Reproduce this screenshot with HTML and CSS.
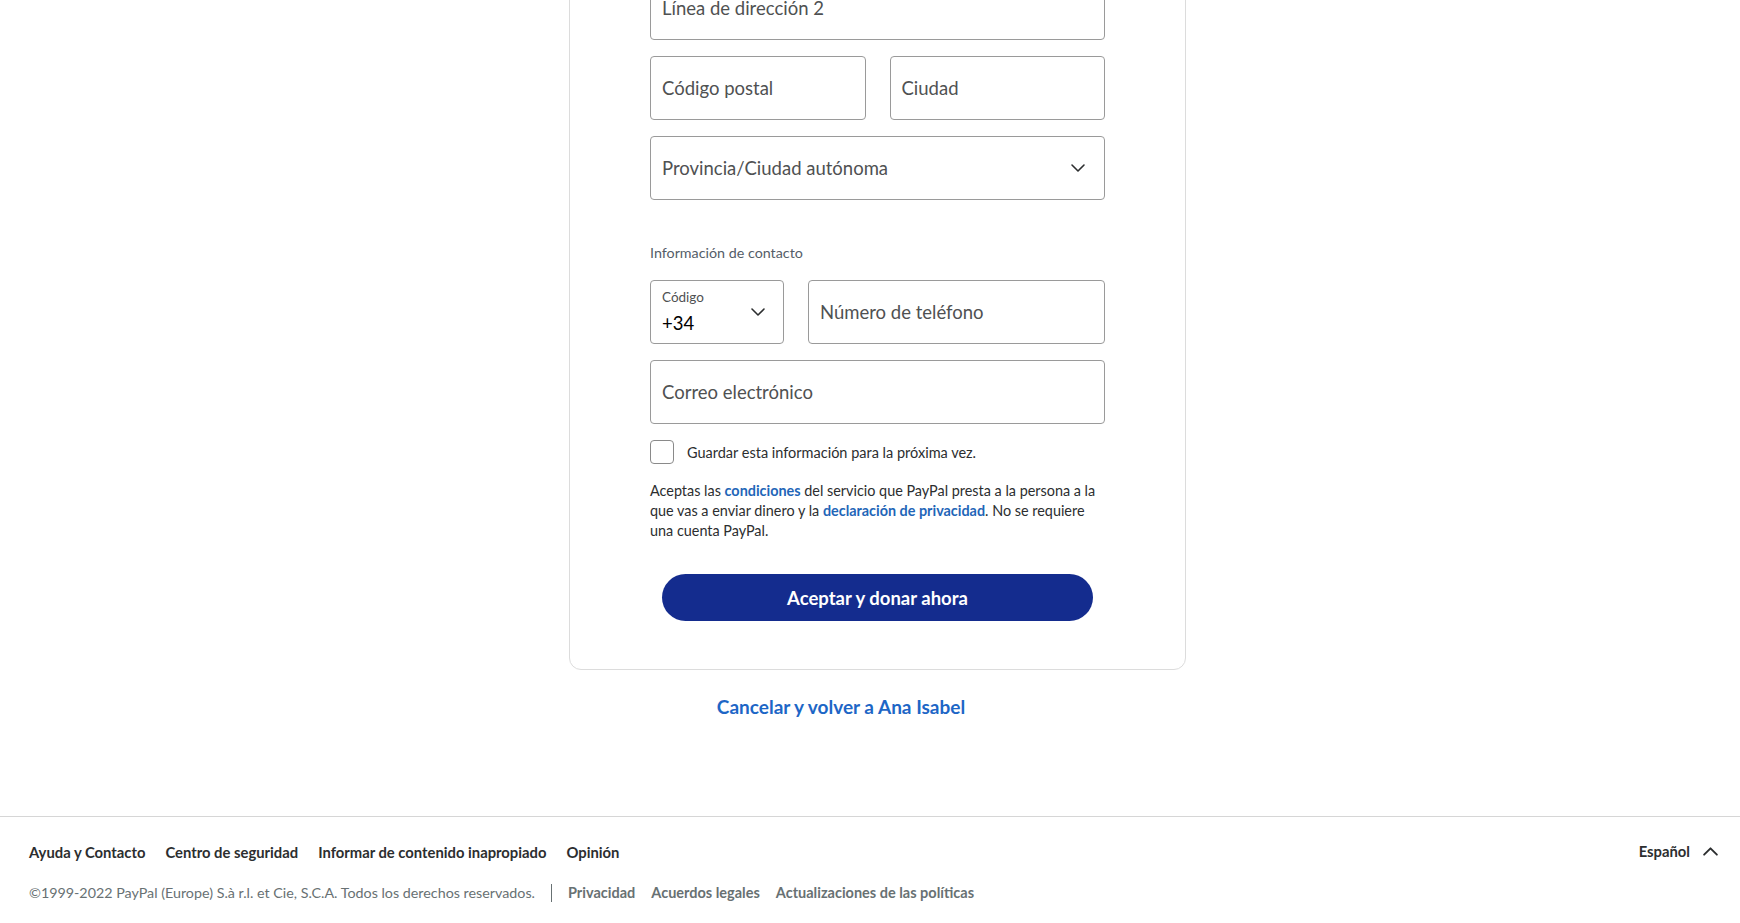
FILE: index.html
```html
<!DOCTYPE html>
<html lang="es">
  <head>
    <meta charset="utf-8">
    <title>PayPal - Donar</title>
    <link rel="stylesheet" href="styles.css">
  </head>
  <body>
    <main class="page">
      <!-- tarjeta con el formulario (la parte de arriba queda fuera por el scroll) -->
      <div class="card">
        <div class="field">
          <span class="placeholder">Línea de dirección 2</span>
        </div>
        <div class="row">
          <div class="field">
            <span class="placeholder">Código postal</span>
          </div>
          <div class="field">
            <span class="placeholder">Ciudad</span>
          </div>
        </div>
        <div class="field select">
          <span class="placeholder">Provincia/Ciudad autónoma</span>
          <svg class="chevron" viewBox="0 0 16 16" width="16" height="16">
            <path d="M2 5 L8 11 L14 5" fill="none" stroke="#2c2e2f" stroke-width="1.6" stroke-linecap="round" stroke-linejoin="round"/>
          </svg>
        </div>

        <p class="section-label">Información de contacto</p>
        <div class="row phone-row">
          <div class="field select code">
            <div class="code-value">
              <span class="small-label">Código</span>
              <span class="value">+34</span>
            </div>
            <svg class="chevron" viewBox="0 0 16 16" width="16" height="16">
              <path d="M2 5 L8 11 L14 5" fill="none" stroke="#2c2e2f" stroke-width="1.6" stroke-linecap="round" stroke-linejoin="round"/>
            </svg>
          </div>
          <div class="field">
            <span class="placeholder">Número de teléfono</span>
          </div>
        </div>
        <div class="field">
          <span class="placeholder">Correo electrónico</span>
        </div>

        <label class="remember">
          <span class="checkbox"></span>
          <span>Guardar esta información para la próxima vez.</span>
        </label>

        <p class="terms">
          Aceptas las <a href="#">condiciones</a> del servicio que PayPal presta a la persona a la
          que vas a enviar dinero y la <a href="#">declaración de privacidad</a>. No se requiere
          una cuenta PayPal.
        </p>

        <button class="donate-btn">Aceptar y donar ahora</button>
      </div>

      <div class="cancel">
        <a href="#" class="cancel-link">Cancelar y volver a Ana Isabel<span class="hidden-name"></span></a>
      </div>
    </main>

    <footer class="footer">
      <div class="footer-top">
        <nav class="footer-links">
          <a href="#">Ayuda y Contacto</a>
          <a href="#">Centro de seguridad</a>
          <a href="#">Informar de contenido inapropiado</a>
          <a href="#">Opinión</a>
        </nav>
        <div class="language">
          <span>Español</span>
          <svg viewBox="0 0 16 16" width="17" height="17">
            <path d="M2 11 L8 5 L14 11" fill="none" stroke="#2c2e2f" stroke-width="1.8" stroke-linecap="round" stroke-linejoin="round"/>
          </svg>
        </div>
      </div>
      <div class="footer-bottom">
        <span class="copyright">©1999-2022 PayPal (Europe) S.à r.l. et Cie, S.C.A. Todos los derechos reservados.</span>
        <span class="divider"></span>
        <a href="#">Privacidad</a>
        <a href="#">Acuerdos legales</a>
        <a href="#">Actualizaciones de las políticas</a>
      </div>
    </footer>
  </body>
</html>
```

FILE: styles.css
```css
body {
  margin: 0;
  font-family: Lato, "Open Sans", sans-serif;
  color: #2c2e2f;
  background-color: #ffffff;
}

a {
  text-decoration: none;
}

.page {
  display: flex;
  flex-direction: column;
  align-items: center;
  padding-left: 15px;
  padding-bottom: 97px;
}

/* la tarjeta empieza por encima de la ventana */
.card {
  width: 455px;
  margin-top: -41px;
  padding: 16px 80px 48px;
  border: 1px solid #dcdcdc;
  border-radius: 12px;
  display: flex;
  flex-direction: column;
  gap: 16px;
}

.row {
  display: flex;
  gap: 24px;
}

.row .field {
  flex: 1;
}

.field {
  height: 62px;
  border: 1px solid #9a9a9a;
  border-radius: 4px;
  display: flex;
  align-items: center;
  justify-content: space-between;
  padding: 0 18px 0 11px;
}

.placeholder {
  font-size: 18.5px;
  color: #4f5152;
}

.chevron {
  flex-shrink: 0;
}

.section-label {
  margin: 27px 0 1px;
  font-size: 14.3px;
  line-height: 20px;
  color: #545d68;
}

.phone-row .code {
  flex: 0 0 104px;
  padding-right: 17px;
}

.code-value {
  align-self: flex-start;
  display: flex;
  flex-direction: column;
  padding-top: 7px;
}

.small-label {
  font-size: 13.5px;
  color: #4f5152;
  line-height: 18px;
}

.value {
  margin-top: 5px;
  font-size: 18.5px;
  color: #000000;
  line-height: 24px;
}

.remember {
  display: flex;
  align-items: center;
  gap: 13px;
  font-size: 14.5px;
  color: #2c2e2f;
}

.checkbox {
  width: 22px;
  height: 22px;
  border: 1px solid #8a8a8a;
  border-radius: 4px;
}

.terms {
  margin: 1px 0 0;
  font-size: 14.4px;
  line-height: 20px;
  color: #2c2e2f;
}

.terms a {
  color: #1f66b8;
  font-weight: bold;
}

.donate-btn {
  margin: 17px 12px 0;
  height: 47px;
  border: none;
  border-radius: 24px;
  background-color: #142c8e;
  color: #ffffff;
  font-family: Lato, "Open Sans", sans-serif;
  font-size: 18.5px;
  font-weight: bold;
  cursor: pointer;
}

.cancel {
  margin-top: 25px;
}

.cancel-link {
  display: flex;
  color: #1d66c6;
  font-size: 19px;
  font-weight: bold;
  line-height: 24px;
}

.hidden-name {
  width: 73px;
}

.footer {
  border-top: 1px solid #d6d6d6;
  padding: 24px 21px 20px 29px;
}

.footer-top {
  display: flex;
  justify-content: space-between;
  align-items: center;
}

.footer-links {
  display: flex;
  gap: 20px;
}

.footer-links a {
  font-size: 14.8px;
  font-weight: bold;
  color: #2c2e2f;
  line-height: 22px;
}

.language {
  display: flex;
  align-items: center;
  gap: 12px;
  font-size: 14.8px;
  font-weight: bold;
  color: #2c2e2f;
  margin-top: -2px;
}

.footer-bottom {
  display: flex;
  align-items: center;
  margin-top: 20px;
  font-size: 14.3px;
  line-height: 20px;
}

.copyright {
  color: #687173;
}

.divider {
  width: 1px;
  height: 18px;
  background-color: #687173;
  margin: 0 16px;
}

.footer-bottom a {
  color: #687173;
  font-size: 14.5px;
  font-weight: bold;
  margin-right: 16px;
}
```
